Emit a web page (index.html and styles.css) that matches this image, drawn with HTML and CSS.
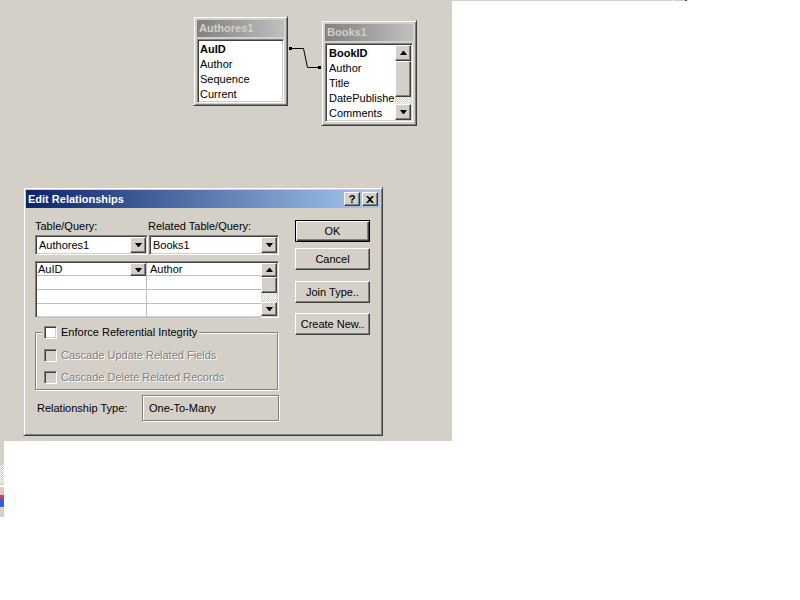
FILE: index.html
```html
<!DOCTYPE html>
<html lang="en">
<head>
<meta charset="UTF-8">
<title>Relationships</title>
<link rel="stylesheet" href="styles.css">
</head>
<body>
<div class="screen">
    <div class="desktop">
        <!-- join line between the two tables -->
        <svg class="join-line" width="452" height="441" viewBox="0 0 452 441">
            <polyline points="290,48.5 303.5,48.5 307.5,67.5 320,67.5" fill="none" stroke="#000" stroke-width="1"/>
            <rect x="289" y="47" width="3" height="3" fill="#000"/>
            <rect x="318" y="66" width="3" height="3" fill="#000"/>
        </svg>

        <div class="win table-win authors">
            <div class="tw-title">Authores1</div>
            <div class="tw-list">
                <div class="tw-items">
                    <div class="key">AuID</div>
                    <div>Author</div>
                    <div>Sequence</div>
                    <div>Current</div>
                </div>
            </div>
        </div>

        <div class="win table-win books">
            <div class="tw-title">Books1</div>
            <div class="tw-list">
                <div class="tw-items">
                    <div class="key">BookID</div>
                    <div>Author</div>
                    <div>Title</div>
                    <div>DatePublished</div>
                    <div>Comments</div>
                </div>
                <div class="vscroll">
                    <div class="sb-btn"><span class="arrow up"></span></div>
                    <div class="sb-thumb tall"></div>
                    <div class="sb-track"></div>
                    <div class="sb-btn"><span class="arrow"></span></div>
                </div>
            </div>
        </div>

        <div class="win dialog">
            <div class="caption">
                <span>Edit Relationships</span>
                <div class="cap-btns">
                    <div class="cap-btn">?</div>
                    <div class="cap-btn">
                        <svg width="8" height="7" viewBox="0 0 8 7"><path d="M0 0h2l2 2 2-2h2l-3 3.5 3 3.5h-2l-2-2-2 2h-2l3-3.5z" fill="#000"/></svg>
                    </div>
                </div>
            </div>
            <div class="dlg-body">
                <div class="dlg-left">
                    <div class="label-row">
                        <span class="col-a">Table/Query:</span>
                        <span>Related Table/Query:</span>
                    </div>
                    <div class="combo-row">
                        <div class="combo col-a">
                            <span class="combo-text">Authores1</span>
                            <div class="drop"><span class="arrow"></span></div>
                        </div>
                        <div class="combo col-b">
                            <span class="combo-text">Books1</span>
                            <div class="drop"><span class="arrow"></span></div>
                        </div>
                    </div>
                    <div class="grid">
                        <div class="grid-rows">
                            <div class="grid-row">
                                <div class="cell a"><span>AuID</span><div class="drop small"><span class="arrow"></span></div></div>
                                <div class="cell b">Author</div>
                            </div>
                            <div class="grid-row"><div class="cell a"></div><div class="cell b"></div></div>
                            <div class="grid-row"><div class="cell a"></div><div class="cell b"></div></div>
                            <div class="grid-row"><div class="cell a"></div><div class="cell b"></div></div>
                        </div>
                        <div class="vscroll">
                            <div class="sb-btn short"><span class="arrow up"></span></div>
                            <div class="sb-thumb"></div>
                            <div class="sb-track"></div>
                            <div class="sb-btn short"><span class="arrow"></span></div>
                        </div>
                    </div>
                    <fieldset class="group">
                        <legend class="legend"><span class="check"></span>Enforce Referential Integrity</legend>
                        <div class="opt disabled first"><span class="check"></span>Cascade Update Related Fields</div>
                        <div class="opt disabled"><span class="check"></span>Cascade Delete Related Records</div>
                    </fieldset>
                    <div class="rel-row">
                        <span class="rel-label">Relationship Type:</span>
                        <div class="rel-box">One-To-Many</div>
                    </div>
                </div>
                <div class="dlg-right">
                    <div class="btn default">OK</div>
                    <div class="btn cancel">Cancel</div>
                    <div class="btn join">Join Type..</div>
                    <div class="btn create">Create New..</div>
                </div>
            </div>
        </div>
    </div>
    <div class="top-strip">
        <div class="ts-a"></div><div class="ts-gap"></div><div class="ts-b"></div><div class="ts-c"></div>
    </div>
</div>
<div class="side-strip">
    <div class="ss-gray h24"></div>
    <div class="ss-check"></div>
    <div class="ss-gray h1"></div>
    <div class="ss-white"></div>
    <div class="ss-gray h8"></div>
    <div class="ss-icon"></div>
    <div class="ss-gray h7"></div>
</div>
</body>
</html>
```

FILE: styles.css
```css
* {
    box-sizing: border-box;
}

body {
    margin: 0;
    background: #fff;
    font-family: "Liberation Sans", Arial, sans-serif;
    font-size: 11px;
    line-height: 13px;
    color: #000;
}

.screen {
    display: flex;
    align-items: flex-start;
}

.desktop {
    position: relative;
    flex: none;
    width: 452px;
    height: 441px;
    background: #d4d0c8;
}

.join-line {
    position: absolute;
    left: 0;
    top: 0;
}

/* classic raised window frame */
.win {
    position: absolute;
    background: #d4d0c8;
    border: 1px solid;
    border-color: #d4d0c8 #404040 #404040 #d4d0c8;
    box-shadow: inset 1px 1px #fff, inset -1px -1px #808080;
}

/* field list windows */
.table-win {
    padding: 3px;
}

.authors {
    left: 193px;
    top: 16px;
    width: 95px;
    height: 90px;
}

.books {
    left: 321px;
    top: 20px;
    width: 96px;
    height: 106px;
}

.tw-title {
    height: 17px;
    line-height: 17px;
    padding-left: 2px;
    background: linear-gradient(to right, #808080, #c0c0c0);
    color: #d4d0c8;
    font-weight: bold;
}

.tw-list {
    display: flex;
    margin-top: 2px;
    padding: 1px;
    background: #fff;
    border: 1px solid;
    border-color: #808080 #fff #fff #808080;
    box-shadow: inset 1px 1px #404040, inset -1px -1px #d4d0c8;
}

.authors .tw-list {
    height: 64px;
}

.books .tw-list {
    height: 79px;
}

.tw-items {
    flex: 1;
    min-width: 0;
    overflow: hidden;
    white-space: nowrap;
    padding: 1px 0 0 1px;
    line-height: 15px;
}

.books .tw-items {
    padding-left: 2px;
}

.key {
    font-weight: bold;
}

/* scrollbars */
.vscroll {
    display: flex;
    flex-direction: column;
    flex: none;
    width: 16px;
}

.sb-btn,
.sb-thumb,
.drop,
.cap-btn,
.btn {
    background: #d4d0c8;
    border: 1px solid;
    border-color: #fff #404040 #404040 #fff;
    box-shadow: inset -1px -1px #808080;
}

.sb-btn {
    display: flex;
    align-items: center;
    justify-content: center;
    height: 16px;
}

.sb-btn.short {
    height: 14px;
}

.sb-thumb {
    height: 16px;
}

.sb-thumb.tall {
    height: 36px;
}

.sb-track {
    flex: 1;
    background: repeating-conic-gradient(#fff 0 25%, #d4d0c8 0 50%) 0 0 / 2px 2px;
}

.arrow {
    width: 1px;
    height: 0;
    border-left: 3px solid transparent;
    border-right: 3px solid transparent;
    border-top: 4px solid #000;
    box-sizing: content-box;
}

.arrow.up {
    border-top: 0;
    border-bottom: 4px solid #000;
}

/* dialog */
.dialog {
    left: 23px;
    top: 187px;
    width: 360px;
    height: 249px;
    padding: 2px;
}

.caption {
    display: flex;
    align-items: center;
    justify-content: space-between;
    height: 18px;
    padding: 0 2px 0 2px;
    background: linear-gradient(to right, #0a246a, #a6caf0);
    color: #fff;
    font-weight: bold;
}

.cap-btns {
    display: flex;
    gap: 2px;
}

.cap-btn {
    display: flex;
    align-items: center;
    justify-content: center;
    width: 16px;
    height: 14px;
    color: #000;
    font-weight: bold;
    font-size: 11px;
}

.dlg-body {
    display: flex;
    padding: 12px 0 0 9px;
}

.dlg-left {
    width: 244px;
}

.label-row {
    display: flex;
    height: 13px;
}

.label-row .col-a {
    width: 113px;
}

.combo-row {
    display: flex;
    gap: 1px;
    margin-top: 2px;
}

.combo {
    display: flex;
    align-items: center;
    height: 20px;
    padding: 1px 1px 1px 3px;
    background: #fff;
    border: 1px solid;
    border-color: #808080 #fff #fff #808080;
    box-shadow: inset 1px 1px #404040, inset -1px -1px #d4d0c8;
}

.combo.col-a {
    width: 113px;
}

.combo.col-b {
    width: 130px;
}

.combo-text {
    flex: 1;
}

.drop {
    display: flex;
    align-items: center;
    justify-content: center;
    width: 16px;
    height: 16px;
}

.drop.small {
    height: 13px;
}

.grid {
    display: flex;
    width: 244px;
    height: 57px;
    margin-top: 6px;
    padding: 1px;
    background: #fff;
    border: 1px solid;
    border-color: #808080 #fff #fff #808080;
    box-shadow: inset 1px 1px #404040, inset -1px -1px #d4d0c8;
}

.grid-rows {
    flex: 1;
}

.grid-row {
    display: flex;
    height: 14px;
    border-bottom: 1px solid #c0c0c0;
}

.grid-row:first-child {
    height: 13px;
}

.cell.a {
    display: flex;
    justify-content: space-between;
    width: 110px;
    padding-left: 1px;
    border-right: 1px solid #c0c0c0;
}

.cell.b {
    flex: 1;
    padding-left: 3px;
}

.group {
    width: 243px;
    margin: 8px 0 0;
    padding: 0 0 5px 0;
    border: 1px solid #808080;
    box-shadow: 1px 1px #fff, inset 1px 1px #fff;
}

.legend {
    display: flex;
    align-items: center;
    margin-left: 6px;
    padding: 0 2px;
    background: #d4d0c8;
}

.check {
    flex: none;
    width: 13px;
    height: 13px;
    margin-right: 4px;
    background: #fff;
    border: 1px solid;
    border-color: #808080 #fff #fff #808080;
    box-shadow: inset 1px 1px #404040, inset -1px -1px #d4d0c8;
}

.opt {
    display: flex;
    align-items: center;
    margin: 9px 0 0 8px;
}

.opt.first {
    margin-top: 10px;
}

.disabled {
    color: #808080;
    text-shadow: 1px 1px #fff;
}

.disabled .check {
    background: #d4d0c8;
}

.rel-row {
    display: flex;
    align-items: center;
    margin-top: 5px;
}

.rel-label {
    width: 107px;
    padding-left: 2px;
}

.rel-box {
    display: flex;
    align-items: center;
    width: 137px;
    height: 26px;
    padding-left: 6px;
    border: 1px solid #808080;
    box-shadow: inset 1px 1px #fff, 1px 1px #fff;
}

.dlg-right {
    display: flex;
    flex-direction: column;
    width: 75px;
    margin-left: 16px;
}

.btn {
    display: flex;
    align-items: center;
    justify-content: center;
    height: 22px;
}

.btn.default {
    border-color: #000;
    box-shadow: inset 1px 1px #fff, inset -1px -1px #404040, inset -2px -2px #808080;
}

.btn.cancel {
    margin-top: 6px;
}

.btn.join {
    margin-top: 11px;
}

.btn.create {
    margin-top: 10px;
}

/* bits of other windows at the screen edge */
.top-strip {
    display: flex;
    height: 1px;
}

.ts-a {
    width: 220px;
    background: #d4d0c8;
}

.ts-gap {
    width: 1px;
}

.ts-b {
    width: 12px;
    background: #d4d0c8;
}

.ts-c {
    width: 2px;
    background: #404040;
}

.side-strip {
    display: flex;
    flex-direction: column;
    width: 4px;
}

.ss-gray {
    background: #d4d0c8;
}

.h24 { height: 24px; }
.h1 { height: 1px; }
.h8 { height: 8px; }
.h7 { height: 7px; }

.ss-check {
    height: 19px;
    background: repeating-conic-gradient(#fff 0 25%, #d4d0c8 0 50%) 0 0 / 2px 2px;
}

.ss-white {
    height: 2px;
    background: #fff;
}

.ss-icon {
    height: 15px;
    background: linear-gradient(#e04040 0 3px, #3a60c8 3px 12px, #d4d0c8 12px);
}
```
